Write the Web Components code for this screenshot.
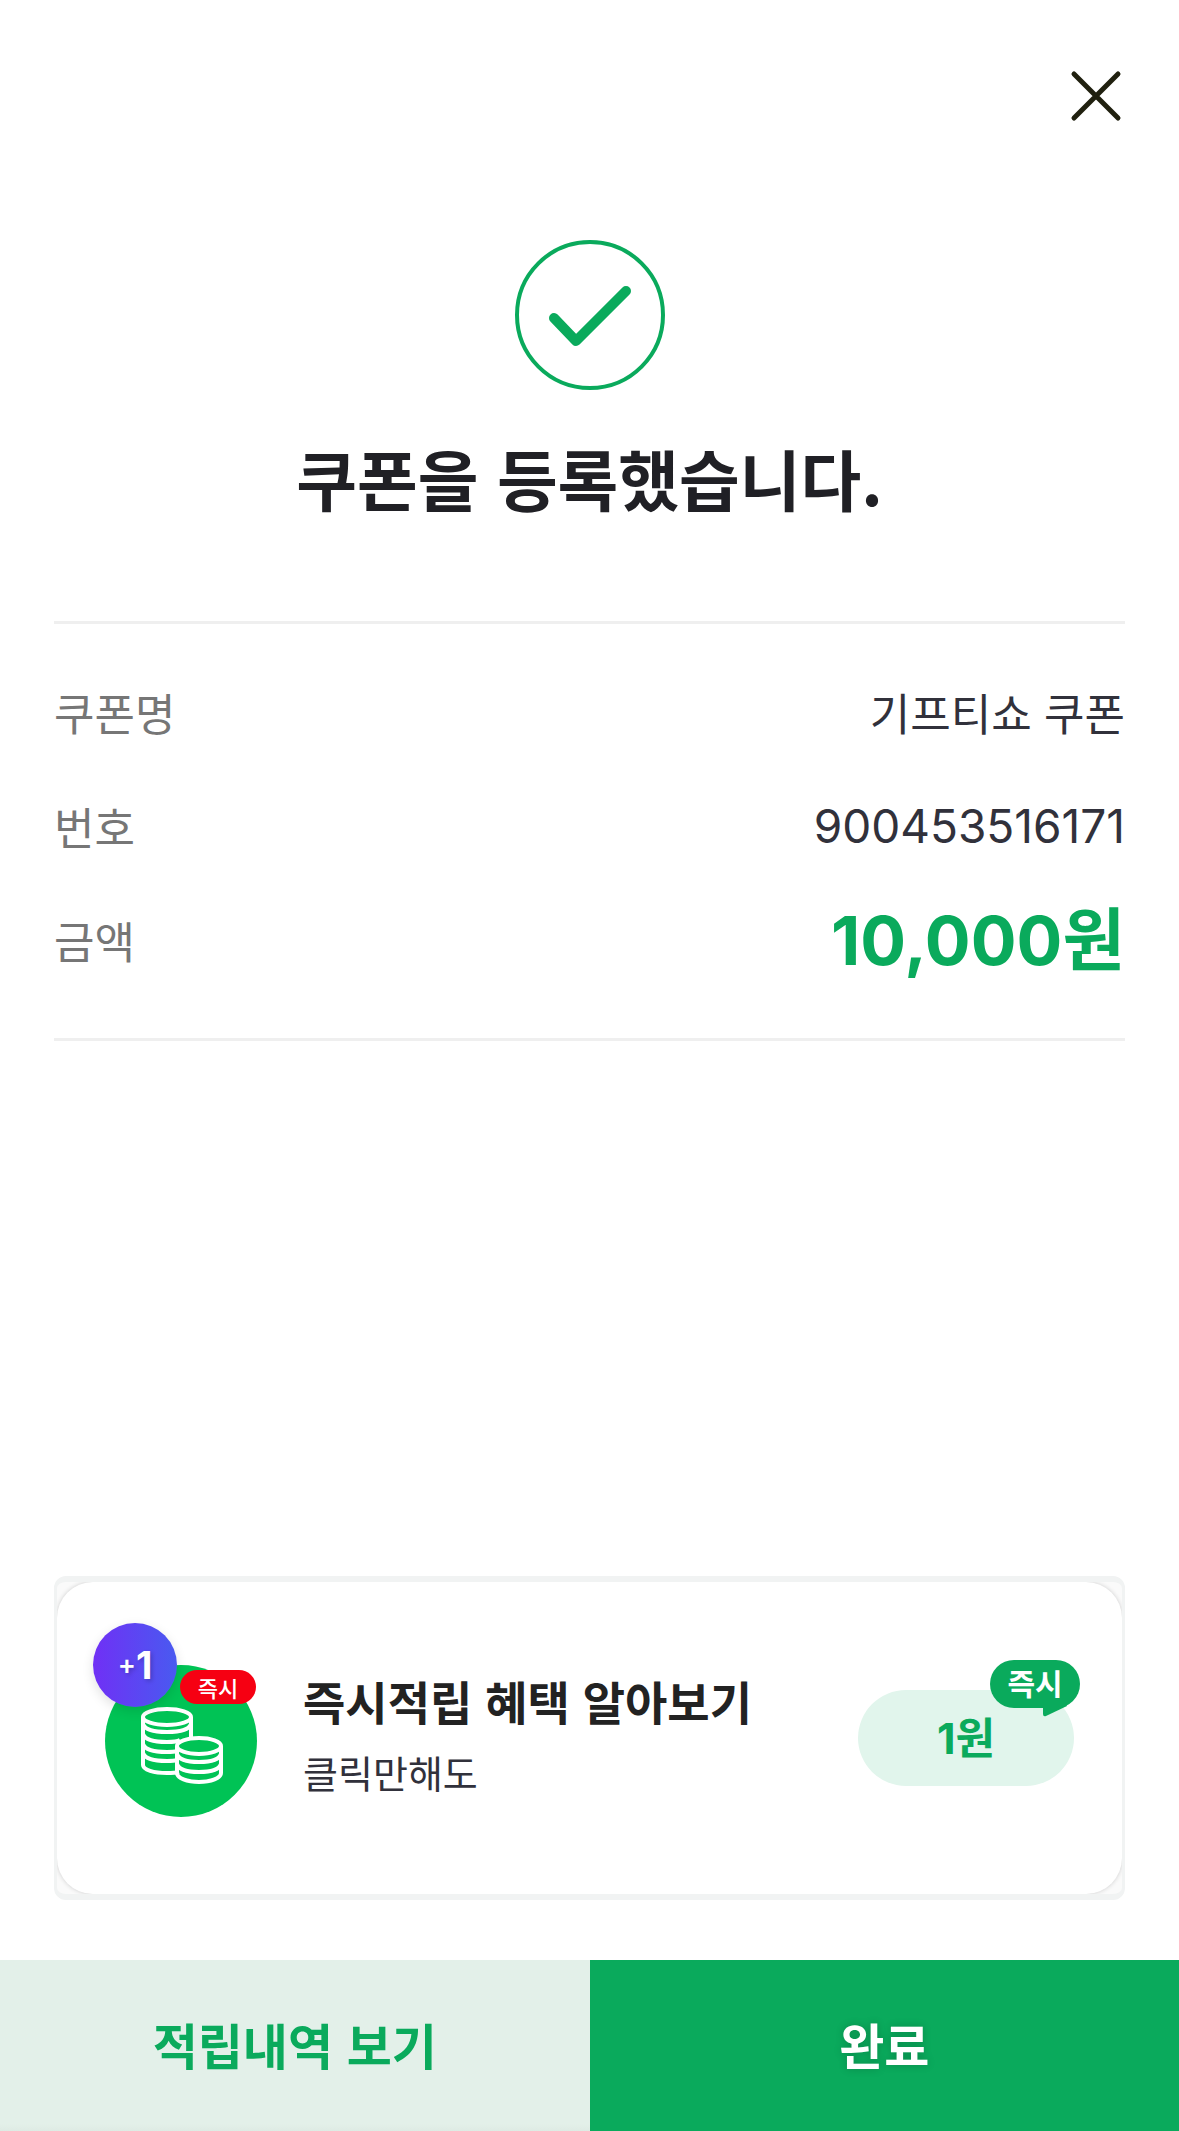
<!DOCTYPE html>
<html lang="ko">
<head>
<meta charset="utf-8">
<meta name="viewport" content="width=device-width, initial-scale=1">
<title>쿠폰 등록</title>
<style>
  body {
    margin: 0;
    background: #fff;
    color: #31313b;
    font-family: "Noto Sans CJK KR", sans-serif;
    --num: Inter, "Noto Sans CJK KR", sans-serif;
    --green: #0aaa5c;
    --gutter: 54px;
  }
</style>
</head>
<body>
<coupon-page>
  <close-button slot="top"></close-button>
  <result-heading>쿠폰을 등록했습니다.</result-heading>
  <detail-list>
    <detail-row label="쿠폰명">기프티쇼 쿠폰</detail-row>
    <detail-row label="번호" kind="number">900453516171</detail-row>
    <detail-row label="금액" kind="amount">10,000원</detail-row>
  </detail-list>
  <reward-card slot="promo">
    <coin-icon slot="icon"></coin-icon>
    <span slot="title">즉시적립 혜택 알아보기</span>
    <span slot="text">클릭만해도</span>
    <reward-pill slot="action" tag="즉시">1원</reward-pill>
  </reward-card>
  <action-bar slot="actions">
    <action-button kind="soft">적립내역 보기</action-button>
    <action-button kind="solid">완료</action-button>
  </action-bar>
</coupon-page>

<script>
const define = (name, render) => customElements.define(name, class extends HTMLElement {
  connectedCallback() {
    if (!this.shadowRoot) this.attachShadow({ mode: "open" }).innerHTML = render(this);
  }
});

define("coupon-page", () => `
  <style>
    :host { display: flex; flex-direction: column; min-height: 100vh; }
    header { display: flex; justify-content: flex-end; padding: 60px var(--gutter) 0; }
    main { display: flex; flex-direction: column; padding: 108px var(--gutter) 48px; }
    aside { margin-top: auto; padding: 0 var(--gutter) 60px; }
  </style>
  <header><slot name="top"></slot></header>
  <main><slot></slot></main>
  <aside><slot name="promo"></slot></aside>
  <footer><slot name="actions"></slot></footer>
`);

define("close-button", () => `
  <style>
    :host { display: block; }
    button { display: block; padding: 0; border: 0; background: none; cursor: pointer; }
    svg { display: block; }
  </style>
  <button type="button" aria-label="닫기">
    <svg width="60" height="72" viewBox="0 0 60 72" fill="none" stroke="#20200f" stroke-width="5" stroke-linecap="round">
      <path d="M9 14 53 58M53 14 9 58"/>
    </svg>
  </button>
`);

define("result-heading", () => `
  <style>
    :host { display: flex; flex-direction: column; align-items: center; gap: 39px; }
    svg { display: block; }
    h1 { margin: 0; font-size: 66px; line-height: 96px; font-weight: 700; color: #202025; text-align: center; }
  </style>
  <svg width="150" height="150" viewBox="0 0 150 150" fill="none" stroke="#0aaa5c" aria-hidden="true">
    <circle cx="75" cy="75" r="73" stroke-width="4"/>
    <path d="M39 78 61 101 111 51" stroke-width="10" stroke-linecap="round" stroke-linejoin="round"/>
  </svg>
  <h1><slot></slot></h1>
`);

define("detail-list", () => `
  <style>
    :host {
      display: flex; flex-direction: column; gap: 18px;
      margin-top: 96px; padding: 40px 0 50px;
      border: solid #efefef; border-width: 3px 0;
    }
  </style>
  <slot></slot>
`);

define("detail-row", el => `
  <style>
    :host { display: flex; justify-content: space-between; align-items: center; height: 96px; font-size: 44px; line-height: 66px; }
    .label { color: #767676; }
    .value { text-align: right; }
    :host([kind="number"]) .value { font-family: var(--num); font-size: 46px; }
    :host([kind="amount"]) .value { font-family: var(--num); font-size: 68px; font-weight: 700; color: var(--green); }
  </style>
  <span class="label">${el.getAttribute("label")}</span>
  <span class="value"><slot></slot></span>
`);

define("reward-card", () => `
  <style>
    :host { display: block; }
    a {
      display: block; border: solid #f1f3f3; border-width: 6px 3px; border-radius: 12px; overflow: hidden;
      background: #fafafa; color: inherit; text-decoration: none;
    }
    .face {
      display: flex; align-items: center; gap: 46px;
      padding: 0 48px; height: 312px; box-sizing: border-box;
      border-radius: 36px; background: #fff; box-shadow: 0 0 4px #ccc;
    }
    .copy { flex: 1; display: flex; flex-direction: column; padding-bottom: 4px; }
    .title { font-size: 46px; line-height: 72px; font-weight: 700; color: #222; }
    .text { font-size: 38px; line-height: 72px; }
    .icon { padding-top: 6px; }
  </style>
  <a href="#reward">
    <div class="face">
      <div class="icon"><slot name="icon"></slot></div>
      <div class="copy">
        <div class="title"><slot name="title"></slot></div>
        <div class="text"><slot name="text"></slot></div>
      </div>
      <slot name="action"></slot>
    </div>
  </a>
`);

define("coin-icon", () => `
  <style>
    :host { display: block; position: relative; width: 152px; height: 152px; border-radius: 50%; background: #00c355; }
    svg { display: block; }
    .plus, .now { position: absolute; display: flex; justify-content: center; align-items: center; color: #fff; }
    .plus {
      left: -12px; top: -42px; width: 84px; height: 84px; border-radius: 50%;
      background: linear-gradient(90deg, #7030f5, #495af0); box-shadow: 0 4px 12px #0000001f;
      font: 700 38px/48px var(--num); text-shadow: 2px 2px 4px #0003;
    }
    .plus small { font-size: 27px; font-weight: 600; }
    .now {
      right: 1px; top: 5px; width: 76px; height: 34px; border-radius: 17px; background: #f60012;
      font-size: 22px; line-height: 34px; font-weight: 500;
    }
  </style>
  <svg width="152" height="152" viewBox="0 0 152 152" fill="none" stroke="#fff" stroke-width="4" aria-hidden="true">
    <ellipse cx="62" cy="52" rx="24" ry="8"/>
    <path d="M38 52v48c0 5 11 8 24 8 4 0 8 0 12-1M86 52v21"/>
    <path d="M38 59c2 6 12 8 24 8s22-2 24-8M38 69c2 6 12 8 24 8 6 0 10 0 13-2M38 79c2 6 12 8 24 8 4 0 7 0 10-1M38 88c2 6 12 8 24 8 4 0 7 0 10-1"/>
    <ellipse cx="94" cy="81" rx="22" ry="8"/>
    <path d="M72 81v27c0 5 10 9 22 9s22-4 22-9V81"/>
    <path d="M72 89c2 6 11 8 22 8s20-2 22-8M72 99c2 6 11 8 22 8s20-2 22-8"/>
  </svg>
  <span class="plus"><small>+</small>1</span>
  <span class="now">즉시</span>
`);

define("reward-pill", el => `
  <style>
    :host {
      display: flex; justify-content: center; align-items: center; position: relative;
      width: 216px; height: 96px; border-radius: 48px; background: #e1f5ec;
      font: 700 43px/60px var(--num); color: var(--green);
    }
    .tag {
      position: absolute; right: -6px; top: -30px; width: 90px; height: 48px; border-radius: 24px;
      background: var(--green); color: #fff; text-align: center;
      font: 700 30px/44px "Noto Sans CJK KR", sans-serif;
    }
    svg { position: absolute; right: 4px; top: 42px; }
  </style>
  <slot></slot>
  <span class="tag">${el.getAttribute("tag")}<svg width="33" height="15" viewBox="0 0 33 15" fill="#0aaa5c" aria-hidden="true"><path d="M0 0v12q0 3 3 2L24 4 22 0z"/></svg></span>
`);

define("action-bar", () => `
  <style>
    :host { display: grid; grid-template-columns: 1fr 1fr; }
  </style>
  <slot></slot>
`);

define("action-button", () => `
  <style>
    :host { display: block; }
    button {
      display: block; width: 100%; padding: 48px 24px 51px; border: 0; cursor: pointer;
      font: inherit; font-size: 49px; line-height: 72px; font-weight: 700;
      background: linear-gradient(#e3f0e9 96%, #deebe4); color: var(--green);
    }
    :host([kind="solid"]) button { background: var(--green); color: #fff; text-shadow: 0 0 9px #0003; }
  </style>
  <button type="button"><slot></slot></button>
`);
</script>
</body>
</html>
